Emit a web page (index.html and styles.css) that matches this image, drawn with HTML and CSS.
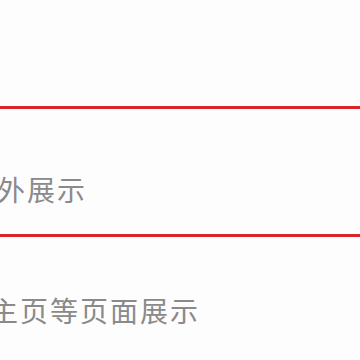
FILE: index.html
```html
<!DOCTYPE html>
<html lang="zh-CN">
<head>
    <meta charset="UTF-8">
    <meta name="viewport" content="width=device-width, initial-scale=1.0">
    <title>展示设置</title>
    <link rel="stylesheet" href="styles.css">
</head>
<body>
    <div class="list">
        <div class="row row-top"></div>
        <div class="row row-active">
            <div class="label label-cut">外展示</div>
        </div>
        <div class="row row-last">
            <div class="label label-cut-more">主页等页面展示</div>
        </div>
    </div>
</body>
</html>
```

FILE: styles.css
```css
body {
    margin: 0;
    padding: 0;
    background-color: #fdfdfd;
    font-family: "Noto Sans CJK SC", "Noto Sans", sans-serif;
    overflow: hidden;
}
.list {
    width: 100%;
}
.row-top {
    height: 106px;
}
.row-active {
    border-top: 3px solid #d8262c;
    border-bottom: 3px solid #d8262c;
    padding: 60px 0 25px;
}
.row-last {
    padding-top: 53px;
}
.label {
    font-size: 28px;
    line-height: 40px;
    letter-spacing: 2px;
    color: #8a8a8a;
    white-space: nowrap;
}
.label-cut {
    margin-left: -3px; /* 左边被裁掉一点 */
}
.label-cut-more {
    margin-left: -10px;
}
```
